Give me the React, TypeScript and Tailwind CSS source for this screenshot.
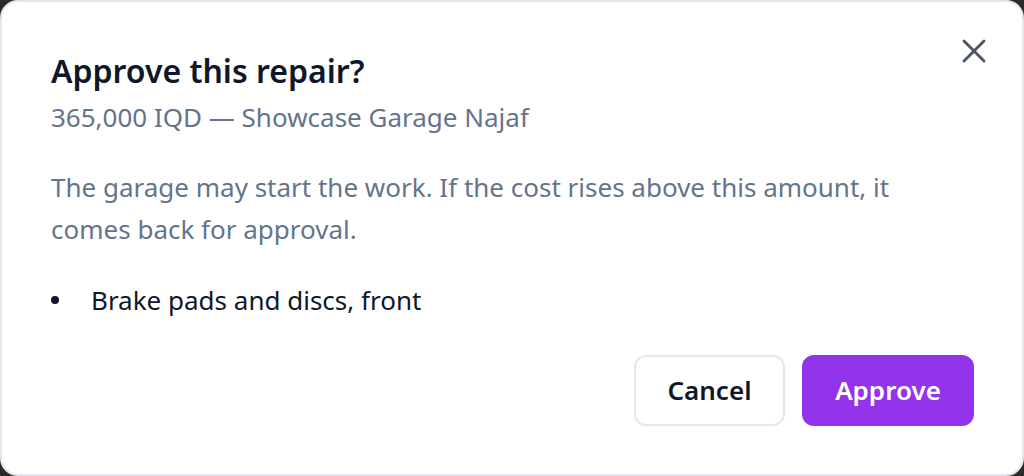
import React from 'react';
import { X } from 'lucide-react';

const font = { fontFamily: '"Noto Sans", "Open Sans", Arial, sans-serif' };

export default function App() {
  return (
    <div className="h-[476px] w-full bg-[#2b2b2b]" style={font}>
      <div className="relative flex h-full flex-col rounded-[18px] border-2 border-[#e6e4ef] bg-white pl-[49px] pr-[48px] pt-[49px]">
        <button className="absolute right-[28px] top-[29px] text-[#4b5563]" aria-label="Close">
          <X className="h-[40px] w-[40px]" strokeWidth={1.7} />
        </button>

        <h2 className="text-[32px] leading-[40px] font-semibold text-[#0f172a]">Approve this repair?</h2>
        <p className="mt-[10px] text-[26px] leading-[32px] text-[#64748b]">365,000 IQD — Showcase Garage Najaf</p>

        <p className="mt-[33px] max-w-[880px] text-[26px] leading-[42px] text-[#64748b]">
          The garage may start the work. If the cost rises above this amount, it comes back for approval.
        </p>

        <ul className="mt-[32px] text-[26px] leading-[36px] text-[#0f172a]">
          <li className="flex items-center gap-[32px]">
            <span className="h-[8px] w-[8px] rounded-full bg-[#0f172a]" />
            Brake pads and discs, front
          </li>
        </ul>

        <div className="mt-auto mb-[48px] flex justify-end gap-[17px]">
          <button className="h-[71px] w-[151px] rounded-[12px] border-2 border-[#e5e7eb] bg-white text-[26px] font-semibold text-[#0f172a]">
            Cancel
          </button>
          <button className="h-[71px] w-[172px] rounded-[12px] bg-[#9333ea] text-[26px] font-semibold text-white">
            Approve
          </button>
        </div>
      </div>
    </div>
  );
}
